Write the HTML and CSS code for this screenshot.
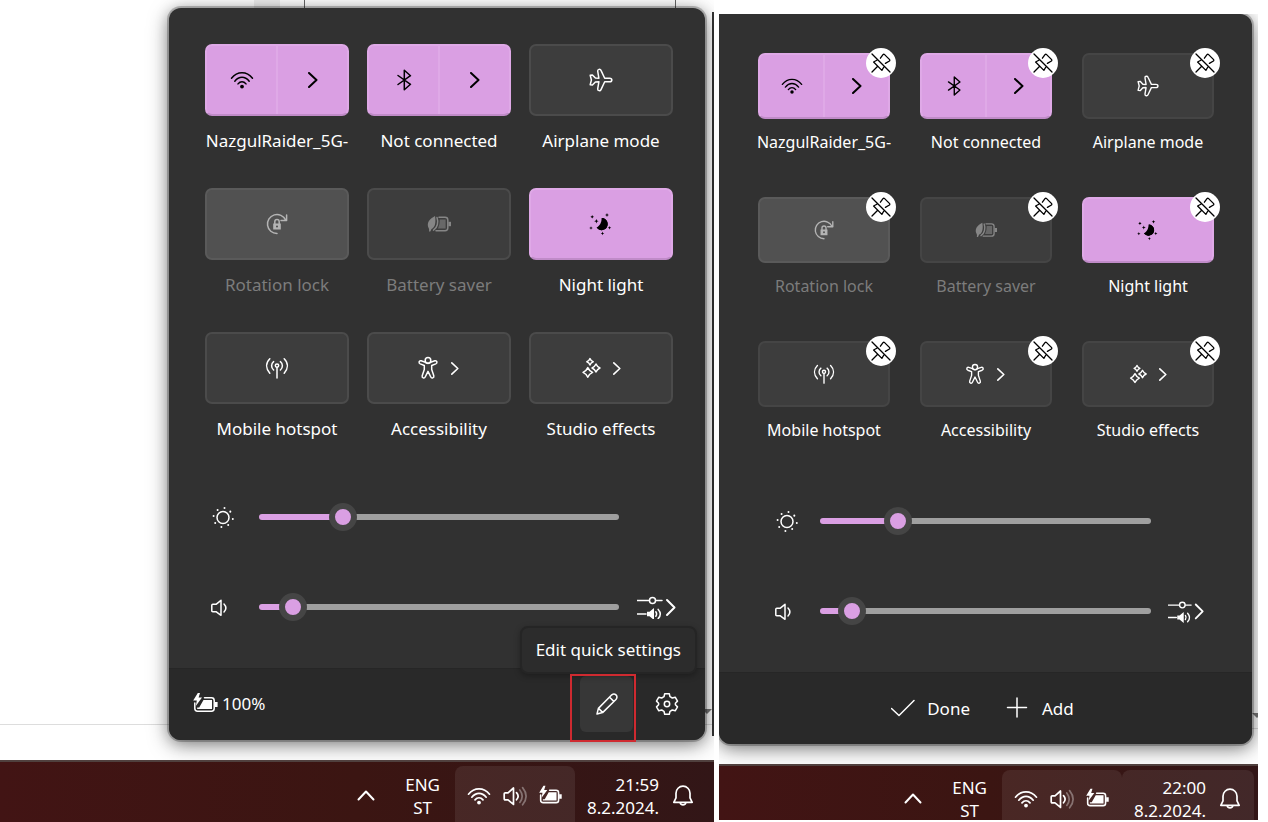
FILE: index.html
```html
<!DOCTYPE html>
<html lang="en">
<head>
    <meta charset="UTF-8">
    <meta name="viewport" content="width=device-width, initial-scale=1.0">
    <title>Quick settings</title>
    <link rel="stylesheet" href="styles.css">
</head>
<body>
    <!-- icon set -->
    <svg class="sprite" aria-hidden="true">
        <symbol id="wifi" viewBox="0 0 24 24">
            <path d="M1.5 10.2C7.2 3 16.8 3 22.5 10.2M4.8 13.2C9 8 15 8 19.2 13.2M8 15.9C10.3 13 13.7 13 16 15.9"/>
            <circle class="solid" cx="12" cy="18.6" r="1.9"/>
        </symbol>
        <symbol id="bluetooth" viewBox="0 0 24 24">
            <path d="M6 7.5L18.5 16.3L12.3 21.8V2.2L18.5 7.7L6 16.5"/>
        </symbol>
        <symbol id="airplane" viewBox="0 0 24 24">
            <path d="M1.2 7.2L3.4 6.9L6.4 10.1L9.9 10.3L8.7 3.2C8.4 1.2 11.2 .6 12 2.4L15.7 10.2H20.6C23.6 10.2 23.6 13.8 20.6 13.8H15.7L12 21.6C11.2 23.4 8.4 22.8 8.7 20.8L9.9 13.7L6.4 13.9L3.4 17.1L1.2 16.8L2.4 12Z"/>
        </symbol>
        <symbol id="rotation" viewBox="0 0 24 24">
            <path d="M12 21.5A9.5 9.5 0 1 1 20.6 8M21.6 3V8.5H16"/>
            <path d="M9.8 12V9.8A2.2 2.2 0 0 1 14.2 9.8V12"/>
            <path class="solid" fill-rule="evenodd" d="M8.2 11.4H15.8V17.6H8.2ZM12 13.4A1 1 0 1 0 12 15.5A1 1 0 1 0 12 13.4Z"/>
        </symbol>
        <symbol id="saver" viewBox="0 0 24 24">
            <path class="solid" d="M8 4C2.5 7 .2 10 1 14.5C1.4 16 2.6 16.6 2 19.5H3.3L4.5 17C8.5 15.5 9 9.5 8 4Z"/>
            <path d="M10 5.5C11.6 10 10.6 15.5 6.5 18.2M12 5.3H18Q20.8 5.3 20.8 8V16Q20.8 18.7 18 18.7H9"/>
            <path class="solid" opacity=".6" d="M12.8 7.6H18.6V16.4H11Q13 12 12.8 7.6Z"/>
            <path class="solid" d="M21.4 9.8H24V14.2H21.4Z"/>
        </symbol>
        <symbol id="night" viewBox="0 0 24 24">
            <path class="solid" d="M13.2 6A6.1 6.1 0 1 1 7.6 15.6C12 15 14.2 10.4 13.2 6Z"/>
            <path class="solid" d="M13.2 6A6.1 6.1 0 1 1 7.6 15.6C10.6 14.4 12.8 10.4 12.6 6.1Z"/>
            <path class="solid" d="M3.2 3l.6 1.2 1.2.6-1.2.6-.6 1.2-.6-1.2-1.2-.6 1.2-.6zM18 1l.6 1.4 1.4.6-1.4.6-.6 1.4-.6-1.4L16 3l1.4-.6zM7.4 7l.6 1.6 1.6.6-1.6.6-.6 1.6-.6-1.6-1.6-.6 1.6-.6zM2 14.2l.5 1.3 1.3.5-1.3.5-.5 1.3-.5-1.3-1.3-.5 1.3-.5zM20.5 14l.5 1.3 1.3.5-1.3.5-.5 1.3-.5-1.3-1.3-.5 1.3-.5zM13.5 19.6l.5 1.3 1.3.5-1.3.5-.5 1.3-.5-1.3-1.3-.5 1.3-.5z"/>
        </symbol>
        <symbol id="hotspot" viewBox="0 0 24 24">
            <circle cx="12" cy="9.6" r="1.7"/>
            <path d="M12 11.5V22M8.6 14A5.4 5.4 0 0 1 8.6 5.6M15.4 14A5.4 5.4 0 0 0 15.4 5.6M4.8 17.2C.6 12.5 .6 7 4.8 2.8M19.2 17.2C23.4 12.5 23.4 7 19.2 2.8"/>
        </symbol>
        <symbol id="access" viewBox="0 0 24 24">
            <circle cx="12" cy="4.4" r="2.8"/>
            <path d="M9.3 6.2L5.2 4.8C3 4.2 2.2 7 4.2 7.9L8.3 9.5V13.5L6.2 19.8C5.6 22 8.4 22.8 9.2 21L12 15.3L14.8 21C15.6 22.8 18.4 22 17.8 19.8L15.7 13.5V9.5L19.8 7.9C21.8 7 21 4.2 18.8 4.8L14.7 6.2Q12 8.6 9.3 6.2Z"/>
        </symbol>
        <symbol id="studio" viewBox="0 0 24 24">
            <path d="M12 2.6Q12.8 5 15.2 5.8Q12.8 6.6 12 9Q11.2 6.6 8.8 5.8Q11.2 5 12 2.6ZM18 8Q19.2 10.8 22 12Q19.2 13.2 18 16Q16.8 13.2 14 12Q16.8 10.8 18 8ZM9.8 11.6Q11.2 14.9 14.6 16.4Q11.2 17.9 9.8 21.2Q8.4 17.9 5 16.4Q8.4 14.9 9.8 11.6Z"/>
        </symbol>
        <symbol id="sun" viewBox="0 0 24 24">
            <circle cx="12" cy="12.5" r="6"/>
            <path class="rays" d="M13.5 3v.1M19.3 6.6v.1M21.8 13.9v.1M17.2 20v.1M10.4 22v.1M4.2 17.9v.1M2.6 10.9v.1M6.6 4.9v.1"/>
        </symbol>
        <symbol id="speaker" viewBox="0 0 24 24">
            <path d="M.8 10.3Q.8 9.3 1.8 9.3H5L10 5.3V20.3L5 16.7H1.8Q.8 16.7 .8 15.7ZM13 9Q16.8 13 13 17"/>
        </symbol>
        <symbol id="mixer" viewBox="0 -1 40 24">
            <path d="M0 4.6H12M19 4.6H25M0 18H9"/>
            <circle cx="15.5" cy="4.6" r="3"/>
            <path class="solid" d="M10 15.8H12.5L17 12V24L12.5 20.2H10Z"/>
            <path d="M18.8 15.8Q20.4 18 18.8 20.2M21.2 13.4Q25.4 18 21.2 22.6"/>
            <path class="thick" d="M30 4L37.5 11.5L30 19"/>
        </symbol>
        <symbol id="pencil" viewBox="0 0 24 24">
            <path d="M2 22L3.4 16.4L16.8 2.8C19.8 .4 23.4 4 21.2 7.2L7.6 20.6ZM14.6 5.2L18.8 9.4M3.6 16.4L7.6 20.4"/>
        </symbol>
        <symbol id="gear" viewBox="0 0 24 24">
            <path d="M9.7 1.8L14.3 1.8L15 4.7L17.3 6L20.2 5.2L22.5 9.1L20.4 11.2V12.8L22.5 14.9L20.2 18.8L17.3 18L15 19.3L14.3 22.2H9.7L9 19.3L6.7 18L3.8 18.8L1.5 14.9L3.6 12.8V11.2L1.5 9.1L3.8 5.2L6.7 6L9 4.7Z"/>
            <circle cx="12" cy="12" r="2.7"/>
        </symbol>
        <symbol id="charging" viewBox="0 0 26 24">
            <path d="M11.5 5.8H18.5Q21.2 5.8 21.2 8.5V16.5Q21.2 19.2 18.5 19.2H4.5Q1.8 19.2 1.8 16.5V11"/>
            <path class="solid" d="M10.5 8H19V17H4.2V15.4H6.2ZM21.8 10H24.6V15H21.8ZM4.8 1L.2 8.6H3.8L2.8 14L9 5.6H5.6L7 1Z"/>
        </symbol>
        <symbol id="volume" viewBox="0 0 24 24">
            <path d="M1.2 9.8Q1.2 8.8 2.2 8.8H5L10.5 4V20.4L5 15.8H2.2Q1.2 15.8 1.2 14.8ZM13.5 8.6Q16.8 12.2 13.5 15.8"/>
            <path opacity=".35" d="M16.8 6Q21.6 12.2 16.8 18.4M19.6 3.6Q26.6 12.2 19.6 20.8"/>
        </symbol>
        <symbol id="bell" viewBox="0 0 24 24">
            <path d="M2.8 18.3L5 13.8V9.2A7 7 0 0 1 19 9.2V13.8L21.2 18.3Z"/>
            <path d="M9.2 18.8A2.9 2.9 0 0 0 14.8 18.8"/>
        </symbol>
        <symbol id="unpin" viewBox="0 0 24 24">
            <path d="M3 3L21 21M3 21L8.2 15.8M7.8 9.2L4.6 11L12.9 19.4L14.7 16.2M11.4 7.2L14 3.6Q14.8 2.8 15.6 3.6L20.4 8.4Q21.2 9.2 20.4 10L16.4 12.4"/>
        </symbol>
        <symbol id="check" viewBox="0 0 24 24">
            <path d="M.5 11.5L8 18.5L23 3.5"/>
        </symbol>
        <symbol id="plus" viewBox="0 0 24 24">
            <path d="M11 1V20M1.5 10.5H20.5"/>
        </symbol>
        <symbol id="next" viewBox="0 0 10 16">
            <path d="M1 1L8.5 8L1 15"/>
        </symbol>
        <symbol id="up" viewBox="0 0 18 12">
            <path d="M1.5 9.5L9 1.5L16.5 9.5"/>
        </symbol>
    </svg>

    <main class="screens">
        <section class="screen screen-view">
            <div class="desktop">
                <div class="panel">
                    <div class="settings">
                        <div class="tiles">
                            <div class="item">
                                <div class="tile split on">
                                    <button type="button" aria-label="Wi-Fi"><svg class="icon"><use href="#wifi"/></svg></button>
                                    <button type="button" aria-label="Wi-Fi networks"><svg class="next"><use href="#next"/></svg></button>
                                </div>
                                <span class="name">NazgulRaider_5G-</span>
                            </div>
                            <div class="item">
                                <div class="tile split on">
                                    <button type="button" aria-label="Bluetooth"><svg class="icon"><use href="#bluetooth"/></svg></button>
                                    <button type="button" aria-label="Bluetooth devices"><svg class="next"><use href="#next"/></svg></button>
                                </div>
                                <span class="name">Not connected</span>
                            </div>
                            <div class="item">
                                <button type="button" class="tile" aria-labelledby="airplane-a"><svg class="icon"><use href="#airplane"/></svg></button>
                                <span class="name" id="airplane-a">Airplane mode</span>
                            </div>
                            <div class="item">
                                <button type="button" class="tile locked" aria-labelledby="rotation-a" disabled><svg class="icon"><use href="#rotation"/></svg></button>
                                <span class="name off" id="rotation-a">Rotation lock</span>
                            </div>
                            <div class="item">
                                <button type="button" class="tile" aria-labelledby="saver-a" disabled><svg class="icon"><use href="#saver"/></svg></button>
                                <span class="name off" id="saver-a">Battery saver</span>
                            </div>
                            <div class="item">
                                <button type="button" class="tile on" aria-labelledby="night-a"><svg class="icon"><use href="#night"/></svg></button>
                                <span class="name" id="night-a">Night light</span>
                            </div>
                            <div class="item">
                                <button type="button" class="tile" aria-labelledby="hotspot-a"><svg class="icon"><use href="#hotspot"/></svg></button>
                                <span class="name" id="hotspot-a">Mobile hotspot</span>
                            </div>
                            <div class="item">
                                <button type="button" class="tile" aria-labelledby="access-a"><svg class="icon"><use href="#access"/></svg><svg class="next small"><use href="#next"/></svg></button>
                                <span class="name" id="access-a">Accessibility</span>
                            </div>
                            <div class="item">
                                <button type="button" class="tile" aria-labelledby="studio-a"><svg class="icon"><use href="#studio"/></svg><svg class="next small"><use href="#next"/></svg></button>
                                <span class="name" id="studio-a">Studio effects</span>
                            </div>
                        </div>
                        <div class="sliders">
                            <div class="slider-row">
                                <label for="brightness-a" aria-label="Brightness"><svg class="icon"><use href="#sun"/></svg></label>
                                <input type="range" id="brightness-a" value="21" style="--value: 21%">
                            </div>
                            <div class="slider-row">
                                <label for="volume-a" aria-label="Volume"><svg class="icon"><use href="#speaker"/></svg></label>
                                <input type="range" id="volume-a" value="6" style="--value: 6%">
                                <button type="button" class="mixer" aria-label="Sound output"><svg><use href="#mixer"/></svg></button>
                            </div>
                        </div>
                    </div>
                    <div class="footer">
                        <button type="button" class="battery"><svg><use href="#charging"/></svg>100%</button>
                        <div class="edit">
                            <button type="button" class="tool active" aria-labelledby="edit-tip"><svg class="icon"><use href="#pencil"/></svg></button>
                            <span class="tooltip" id="edit-tip" role="tooltip">Edit quick settings</span>
                            <span class="marker"></span>
                        </div>
                        <button type="button" class="tool" aria-label="All settings"><svg class="icon"><use href="#gear"/></svg></button>
                    </div>
                </div>
            </div>
            <div class="taskbar">
                <button type="button" class="overflow" aria-label="Hidden icons"><svg><use href="#up"/></svg></button>
                <button type="button" class="language">ENG<br>ST</button>
                <button type="button" class="tray lit" aria-label="Network, volume, battery">
                    <svg><use href="#wifi"/></svg>
                    <svg><use href="#volume"/></svg>
                    <svg><use href="#charging"/></svg>
                </button>
                <button type="button" class="clock"><span>21:59<br>8.2.2024.</span><svg><use href="#bell"/></svg></button>
            </div>
        </section>

        <section class="screen screen-edit">
            <div class="desktop">
                <div class="panel">
                    <div class="settings">
                        <div class="tiles">
                            <div class="item">
                                <div class="tile split on">
                                    <button type="button" aria-label="Wi-Fi"><svg class="icon"><use href="#wifi"/></svg></button>
                                    <button type="button" aria-label="Wi-Fi networks"><svg class="next"><use href="#next"/></svg></button>
                                </div>
                                <span class="name">NazgulRaider_5G-</span>
                                <button type="button" class="unpin" aria-label="Unpin Wi-Fi"><svg><use href="#unpin"/></svg></button>
                            </div>
                            <div class="item">
                                <div class="tile split on">
                                    <button type="button" aria-label="Bluetooth"><svg class="icon"><use href="#bluetooth"/></svg></button>
                                    <button type="button" aria-label="Bluetooth devices"><svg class="next"><use href="#next"/></svg></button>
                                </div>
                                <span class="name">Not connected</span>
                                <button type="button" class="unpin" aria-label="Unpin Bluetooth"><svg><use href="#unpin"/></svg></button>
                            </div>
                            <div class="item">
                                <button type="button" class="tile" aria-labelledby="airplane-b"><svg class="icon"><use href="#airplane"/></svg></button>
                                <span class="name" id="airplane-b">Airplane mode</span>
                                <button type="button" class="unpin" aria-label="Unpin Airplane mode"><svg><use href="#unpin"/></svg></button>
                            </div>
                            <div class="item">
                                <button type="button" class="tile locked" aria-labelledby="rotation-b" disabled><svg class="icon"><use href="#rotation"/></svg></button>
                                <span class="name off" id="rotation-b">Rotation lock</span>
                                <button type="button" class="unpin" aria-label="Unpin Rotation lock"><svg><use href="#unpin"/></svg></button>
                            </div>
                            <div class="item">
                                <button type="button" class="tile" aria-labelledby="saver-b" disabled><svg class="icon"><use href="#saver"/></svg></button>
                                <span class="name off" id="saver-b">Battery saver</span>
                                <button type="button" class="unpin" aria-label="Unpin Battery saver"><svg><use href="#unpin"/></svg></button>
                            </div>
                            <div class="item">
                                <button type="button" class="tile on" aria-labelledby="night-b"><svg class="icon"><use href="#night"/></svg></button>
                                <span class="name" id="night-b">Night light</span>
                                <button type="button" class="unpin" aria-label="Unpin Night light"><svg><use href="#unpin"/></svg></button>
                            </div>
                            <div class="item">
                                <button type="button" class="tile" aria-labelledby="hotspot-b"><svg class="icon"><use href="#hotspot"/></svg></button>
                                <span class="name" id="hotspot-b">Mobile hotspot</span>
                                <button type="button" class="unpin" aria-label="Unpin Mobile hotspot"><svg><use href="#unpin"/></svg></button>
                            </div>
                            <div class="item">
                                <button type="button" class="tile" aria-labelledby="access-b"><svg class="icon"><use href="#access"/></svg><svg class="next small"><use href="#next"/></svg></button>
                                <span class="name" id="access-b">Accessibility</span>
                                <button type="button" class="unpin" aria-label="Unpin Accessibility"><svg><use href="#unpin"/></svg></button>
                            </div>
                            <div class="item">
                                <button type="button" class="tile" aria-labelledby="studio-b"><svg class="icon"><use href="#studio"/></svg><svg class="next small"><use href="#next"/></svg></button>
                                <span class="name" id="studio-b">Studio effects</span>
                                <button type="button" class="unpin" aria-label="Unpin Studio effects"><svg><use href="#unpin"/></svg></button>
                            </div>
                        </div>
                        <div class="sliders">
                            <div class="slider-row">
                                <label for="brightness-b" aria-label="Brightness"><svg class="icon"><use href="#sun"/></svg></label>
                                <input type="range" id="brightness-b" value="21" style="--value: 21%">
                            </div>
                            <div class="slider-row">
                                <label for="volume-b" aria-label="Volume"><svg class="icon"><use href="#speaker"/></svg></label>
                                <input type="range" id="volume-b" value="6" style="--value: 6%">
                                <button type="button" class="mixer" aria-label="Sound output"><svg><use href="#mixer"/></svg></button>
                            </div>
                        </div>
                    </div>
                    <div class="footer">
                        <button type="button" class="action"><svg><use href="#check"/></svg>Done</button>
                        <button type="button" class="action"><svg><use href="#plus"/></svg>Add</button>
                    </div>
                </div>
            </div>
            <div class="taskbar">
                <button type="button" class="overflow" aria-label="Hidden icons"><svg><use href="#up"/></svg></button>
                <button type="button" class="language">ENG<br>ST</button>
                <button type="button" class="tray lit" aria-label="Network, volume, battery">
                    <svg><use href="#wifi"/></svg>
                    <svg><use href="#volume"/></svg>
                    <svg><use href="#charging"/></svg>
                </button>
                <button type="button" class="clock lit"><span>22:00<br>8.2.2024.</span><svg><use href="#bell"/></svg></button>
            </div>
        </section>
    </main>
</body>
</html>
```

FILE: styles.css
```css
* {
    box-sizing: border-box;
}
body {
    margin: 0;
    background-color: #fff;
    color: #fff;
    font-family: "Noto Sans", "Open Sans", sans-serif;
    font-size: 17px;
    line-height: 24px;
}
button {
    margin: 0;
    padding: 0;
    border: none;
    background: none;
    color: inherit;
    font: inherit;
}
svg {
    display: block;
    flex: none;
    width: 24px;
    height: 24px;
    fill: none;
    stroke: currentColor;
    stroke-width: 1.5;
    stroke-linecap: round;
    stroke-linejoin: round;
    overflow: visible;
}
.sprite {
    position: absolute;
    width: 0;
    height: 0;
}
.solid {
    fill: currentColor;
    stroke: none;
}
.rays,
.thick {
    stroke-width: 2;
}

/* two desktops side by side */
.screens {
    display: grid;
    grid-template-columns: 714fr 539fr;
    gap: 5px;
    min-height: 100vh;
    padding-right: 10px;
}
.screen {
    display: flex;
    flex-direction: column;
}
.screen-edit {
    margin-top: 14px;
}
.desktop {
    position: relative;
    flex: 1;
    overflow: hidden;
    background: linear-gradient(#ddd, #ddd) left bottom 35px / 100% 1px no-repeat;
}
.screen-view .desktop {
    padding: 8px 9px 20px 169px;
    background:
        linear-gradient(#333, #333) right top 12px / 2px 724px no-repeat,
        linear-gradient(#666, #666) 304px 0 / 1px 8px no-repeat,
        linear-gradient(#666, #666) 675px 0 / 1px 8px no-repeat,
        linear-gradient(#eee, #eee) 254px 0 / 26px 8px no-repeat,
        linear-gradient(#ddd, #ddd) left bottom 35px / 100% 1px no-repeat;
}
.screen-edit .desktop {
    padding: 0 6px 20px 0;
}
/* scroll arrow of the window behind the panel */
.desktop::after {
    content: "";
    position: absolute;
    right: 2px;
    bottom: 46px;
    border: 5px solid transparent;
    border-top-color: #777;
    border-bottom: none;
}
.screen-edit .desktop::after {
    right: -4px;
}

.panel {
    position: relative;
    z-index: 1;
    border-radius: 12px;
    background-color: #313131;
    box-shadow: 0 0 0 2px rgba(0, 0, 0, 0.22), 0 2px 14px rgba(0, 0, 0, 0.25), 0 5px 22px rgba(0, 0, 0, 0.4);
}
.screen-edit .panel {
    border-top-left-radius: 0;
}
.settings {
    padding: 36px 32px 16px 36px;
}
.screen-edit .settings {
    padding: 39px 38px 16px 39px;
}

/* tiles */
.tiles {
    display: grid;
    grid-template-columns: repeat(3, minmax(0, 1fr));
    gap: 35px 18px;
}
.screen-edit .tiles {
    gap: 43px 30px;
}
.item {
    position: relative;
    display: flex;
    flex-direction: column;
    align-items: center;
    gap: 13px;
    white-space: nowrap;
}
.screen-edit .item {
    gap: 11px;
    font-size: 16px;
}
.tile {
    display: flex;
    align-items: center;
    justify-content: center;
    gap: 11px;
    width: 100%;
    height: 72px;
    border: 2px solid #4b4b4b;
    border-radius: 7px;
    background-color: #3d3d3d;
}
.screen-edit .tile {
    height: 66px;
    border-color: #454545;
}
.tile:disabled {
    color: #868686;
}
.tile.locked {
    border-color: #5a5a5a;
    background-color: #515151;
    color: #b4b4b4;
}
.tile.on,
.screen-edit .tile.on {
    border-color: #dfa9e7;
    border-bottom-color: #c08bc8;
    background-color: #da9fe3;
    color: #000;
}
.split {
    gap: 0;
}
.split button {
    display: flex;
    flex: 1;
    align-items: center;
    justify-content: center;
    height: 100%;
}
.split button + button {
    border-left: 2px solid #dfa9e7;
}
.name.off {
    color: #7c7c7c;
}
.next {
    width: 10px;
    height: 16px;
    stroke-width: 2;
}
.next.small {
    width: 8px;
    height: 13px;
    margin-right: 4px;
}
.screen-edit .tile .icon {
    width: 22px;
    height: 22px;
}
.unpin {
    position: absolute;
    top: -5px;
    right: -6px;
    display: flex;
    align-items: center;
    justify-content: center;
    width: 30px;
    height: 30px;
    border-radius: 50%;
    background-color: #fff;
    color: #000;
}
.unpin svg {
    stroke-width: 1.3;
}

/* sliders */
.sliders {
    margin-top: 31px;
}
.screen-edit .sliders {
    margin-top: 34px;
}
.slider-row {
    display: grid;
    grid-template-columns: 54px 1fr 54px;
    align-items: center;
    height: 90px;
}
.screen-edit .slider-row {
    grid-template-columns: 62px 1fr 63px;
}
.slider-row label {
    padding-left: 6px;
}
.screen-edit .slider-row label {
    padding-left: 17px;
}
input[type="range"] {
    -webkit-appearance: none;
    appearance: none;
    width: 100%;
    height: 28px;
    margin: 0;
    background: none;
}
input[type="range"]::-webkit-slider-runnable-track {
    height: 6px;
    border-radius: 3px;
    background: linear-gradient(to right, #da9fe3 var(--value), #9f9f9f var(--value));
}
input[type="range"]::-webkit-slider-thumb {
    -webkit-appearance: none;
    width: 28px;
    height: 28px;
    margin-top: -11px;
    border: 6px solid #454545;
    border-radius: 50%;
    background-color: #da9fe3;
}
.mixer {
    padding-left: 18px;
}
.screen-edit .mixer {
    padding-left: 17px;
}
.mixer svg {
    width: 40px;
}
.screen-edit .mixer svg {
    width: 37px;
}

/* panel footer */
.footer {
    display: flex;
    align-items: center;
    gap: 7px;
    height: 72px;
    padding: 0 12px 2px 24px;
    border-top: 1px solid #262626;
    border-radius: 0 0 12px 12px;
    background-color: #292929;
}
.screen-edit .footer {
    justify-content: center;
    gap: 36px;
    padding: 0 6px 0 0;
}
.battery {
    display: flex;
    align-items: center;
    gap: 3px;
    margin-right: auto;
}
.battery svg {
    width: 26px;
}
.edit {
    position: relative;
}
.tool {
    display: flex;
    align-items: center;
    justify-content: center;
    width: 53px;
    height: 56px;
    border-radius: 6px;
}
.tool.active {
    background-color: #373737;
}
.tooltip {
    position: absolute;
    right: -64px;
    bottom: 58px;
    padding: 10px 14px;
    border: 2px solid #252525;
    border-radius: 8px;
    background-color: #2c2c2c;
    box-shadow: 0 2px 6px rgba(0, 0, 0, 0.3);
    white-space: nowrap;
}
.marker {
    position: absolute;
    inset: -2px -3px -10px -10px;
    border: 2px solid #cf2a30;
}
.action {
    display: flex;
    align-items: center;
    gap: 12px;
}

/* taskbar */
.taskbar {
    display: flex;
    justify-content: flex-end;
    height: 62px;
    padding: 4px 7px 0 0;
    border-top: 2px solid #50403e;
    background: linear-gradient(to right, #421414, #3b1512 50%, #321617);
    line-height: 23px;
}
.screen-edit .taskbar {
    height: 58px;
    padding-right: 4px;
    border-bottom: 2px solid #fff;
}
.taskbar button {
    display: flex;
    align-items: center;
    height: 56px;
    padding-top: 4px;
}
.screen-edit .taskbar button {
    height: 50px;
    padding-top: 8px;
}
.taskbar svg {
    stroke-width: 1.7;
}
.overflow {
    margin-right: 30px;
}
.taskbar .overflow svg {
    width: 18px;
    height: 12px;
    stroke-width: 2;
}
.language {
    margin-right: 15px;
}
.taskbar .tray,
.taskbar .clock {
    gap: 12px;
    padding-right: 12px;
    padding-left: 12px;
    border-radius: 8px 8px 0 0;
}
.taskbar .clock {
    text-align: right;
}
.lit {
    background-color: rgba(255, 255, 255, 0.08);
}
```
